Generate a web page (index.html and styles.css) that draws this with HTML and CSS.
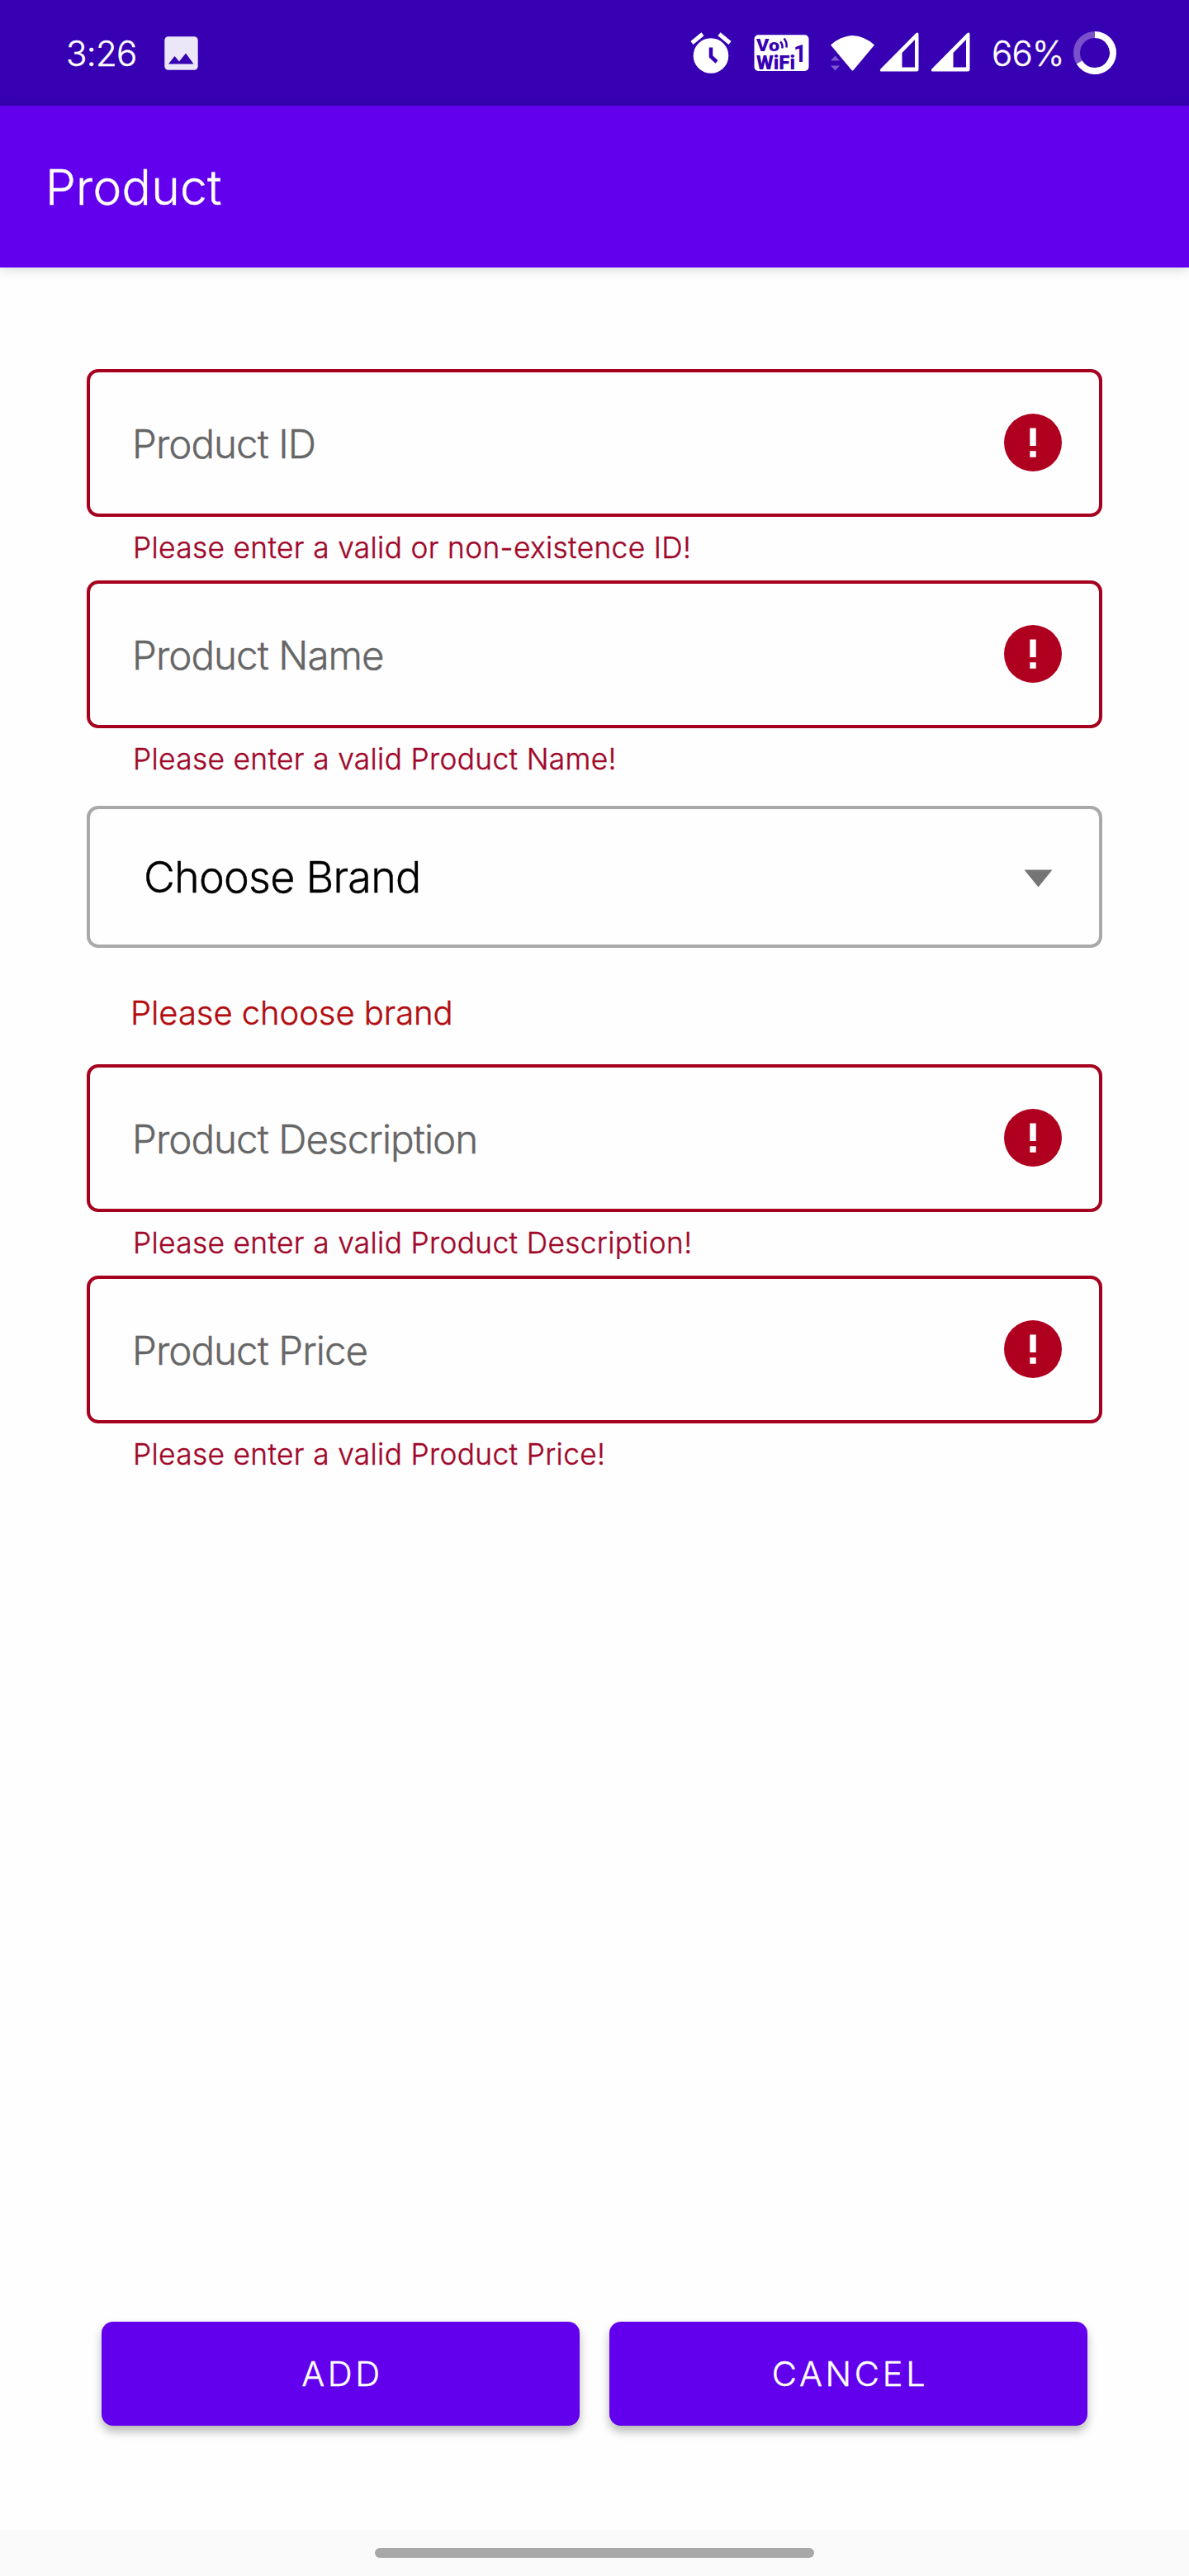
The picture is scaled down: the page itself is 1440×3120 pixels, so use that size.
FILE: index.html
```html
<!DOCTYPE html>
<html lang="en">
<head>
<meta charset="utf-8">
<title>Product</title>
<link rel="stylesheet" href="styles.css">
</head>
<body>
<div class="screen">
  <header class="status">
    <span class="clock">3:26</span>
    <svg class="picture" width="41" height="41" viewBox="0 0 41 41"><rect x=".3" y=".3" width="40.4" height="40.4" rx="4.5" fill="#ebe6f8"/><path d="M5 33.5 12.5 24l5.5 6.5 8-10L35.500 33.500z" fill="#3700b3"/></svg>
    <div class="indicators">
      <svg class="alarm" width="50" height="50" viewBox="0 0 50 50"><circle cx="25" cy="28.500" r="21.300" fill="#fff"/><path d="M2 13 15 2.300M35 2.300 48 13" stroke="#fff" stroke-width="5" fill="none"/><path d="M25 18.500v11l7 6.500" stroke="#3700b3" stroke-width="4.500" fill="none"/></svg>
      <svg class="vowifi" width="67" height="45" viewBox="0 0 67 45"><rect x=".5" y=".3" width="66" height="43.700" rx="5" fill="#fff"/><g class="vowifi-text"><text x="3" y="19.500" font-size="21" textLength="28" lengthAdjust="spacingAndGlyphs">Vo</text><text x="3" y="41.500" font-size="23" textLength="47" lengthAdjust="spacingAndGlyphs">WiFi</text></g><text class="vowifi-one" x="48" y="33" font-size="30" textLength="16" lengthAdjust="spacingAndGlyphs">1</text><path d="M32 8.500q3 2.500 2.500 8M36.500 4.500q4 4.500 3 11" stroke="#3700b3" stroke-width="2.500" fill="none"/></svg>
      <svg class="wifi" width="54" height="45" viewBox="0 0 54 45"><path d="M1 12.500Q12 2 27.500 1 43 2 54 12.500L28.500 43q-1 1-2 0z" fill="#fff"/><path d="M1 31.500 6.500 25.500 12 31.500zM1 37.500h11l-5.500 6z" fill="#8059cf"/></svg>
      <svg class="signal" width="48" height="48" viewBox="0 0 48 48"><path fill-rule="evenodd" d="M1.500 47.500Q0 46 1.500 44.500L44 1.500Q47.500-1 47.500 3V45q0 2.500-2.500 2.500zM27.500 25V42.500H43V9z" fill="#fff"/></svg>
      <svg class="signal second" width="48" height="48" viewBox="0 0 48 48"><path fill-rule="evenodd" d="M1.500 47.500Q0 46 1.500 44.500L44 1.500Q47.500-1 47.500 3V45q0 2.500-2.500 2.500zM27.500 25V42.500H43V9z" fill="#fff"/></svg>
      <span class="percent">66%</span>
      <svg class="battery" width="52" height="52" viewBox="0 0 52 52"><circle cx="26" cy="26" r="22" fill="none" stroke="#7a50cc" stroke-width="8"/><path d="M26 4A22 22 0 1 1 7.200 37.500" fill="none" stroke="#fff" stroke-width="8"/></svg>
    </div>
  </header>
  <div class="appbar"><h1 class="title">Product</h1></div>
  <main class="form">
    <div class="field"><span class="label">Product ID</span><svg class="alert" width="70" height="70" viewBox="0 0 70 70"><circle cx="35" cy="35" r="35" fill="#b00020"/><path d="M31.300 17.500h7.400v21.500h-7.400zM31.300 45.300h7.400v7.400h-7.400z" fill="#fff"/></svg></div>
    <p class="error">Please enter a valid or non-existence ID!</p>
    <div class="field"><span class="label">Product Name</span><svg class="alert" width="70" height="70" viewBox="0 0 70 70"><circle cx="35" cy="35" r="35" fill="#b00020"/><path d="M31.300 17.500h7.400v21.500h-7.400zM31.300 45.300h7.400v7.400h-7.400z" fill="#fff"/></svg></div>
    <p class="error">Please enter a valid Product Name!</p>
    <div class="select"><span class="choice">Choose Brand</span><svg class="arrow" width="35" height="22" viewBox="0 0 35 22"><path d="M.5.500h34L17.500 21.500z" fill="#757575"/></svg></div>
    <p class="brand-error">Please choose brand</p>
    <div class="field"><span class="label">Product Description</span><svg class="alert" width="70" height="70" viewBox="0 0 70 70"><circle cx="35" cy="35" r="35" fill="#b00020"/><path d="M31.300 17.500h7.400v21.500h-7.400zM31.300 45.300h7.400v7.400h-7.400z" fill="#fff"/></svg></div>
    <p class="error">Please enter a valid Product Description!</p>
    <div class="field"><span class="label">Product Price</span><svg class="alert" width="70" height="70" viewBox="0 0 70 70"><circle cx="35" cy="35" r="35" fill="#b00020"/><path d="M31.300 17.500h7.400v21.500h-7.400zM31.300 45.300h7.400v7.400h-7.400z" fill="#fff"/></svg></div>
    <p class="error">Please enter a valid Product Price!</p>
  </main>
  <div class="actions"><button class="btn">ADD</button><button class="btn">CANCEL</button></div>
  <footer class="nav"><div class="pill"></div></footer>
</div>
</body>
</html>
```
FILE: styles.css
```css
* { box-sizing: border-box; }
body { margin: 0; background: #fefefe; }
svg { display: block; flex: none; overflow: visible; -webkit-text-stroke: 0; }
p, h1 { margin: 0; font-weight: inherit; white-space: nowrap; }

.screen {
  width: 1440px;
  height: 3120px;
  display: flex;
  flex-direction: column;
  font-family: Inter, "Liberation Sans", sans-serif;
  font-weight: 300;
  -webkit-text-stroke: .4px currentColor;
}

/* Status bar */
.status {
  height: 128px;
  flex: none;
  display: flex;
  align-items: center;
  padding: 0 88px 0 80px;
  background: #3700b3;
  color: #fff;
}
.clock { width: 119px; padding-top: 1px; font-size: 42px; letter-spacing: -.7px; }
.picture { margin-top: 1px; }
.indicators { display: flex; align-items: center; margin-left: auto; }
.vowifi { margin-left: 27px; }
.vowifi-text { font-family: Roboto, sans-serif; font-weight: 900; fill: #3700b3; }
.vowifi-one { font-family: Roboto, sans-serif; font-weight: 700; fill: #3700b3; }
.wifi { margin-left: 25px; }
.signal { margin: 0 0 3px 6px; }
.signal.second { margin-left: 14px; }
.percent { width: 99px; margin-left: 26px; padding-top: 1px; font-size: 42px; letter-spacing: -.75px; }

/* App bar */
.appbar {
  height: 196px;
  flex: none;
  display: flex;
  align-items: center;
  padding-left: 55px;
  background: #6200ee;
  color: #fff;
  box-shadow: 0 2px 14px rgba(0, 0, 0, .16);
}
.title { font-size: 58.700px; letter-spacing: .26px; padding-top: 1px; }

/* Form */
.form { display: flex; flex-direction: column; padding: 123px 105px 0; }
.field {
  height: 179px;
  display: flex;
  align-items: center;
  justify-content: space-between;
  padding: 0 45px 0 51px;
  border: 4px solid #a6001f;
  border-radius: 14px;
}
.label { padding-top: 2px; font-size: 47.500px; letter-spacing: -.95px; color: #666; }
.alert { margin-bottom: 1px; }
.error {
  height: 77px;
  padding-left: 56px;
  font-size: 35.300px;
  line-height: 75px;
  letter-spacing: .34px;
  color: #a0082a;
}
.select {
  height: 172px;
  display: flex;
  align-items: center;
  justify-content: space-between;
  margin-top: 17px;
  padding: 0 56px 0 65px;
  border: 4px solid #a9a9a9;
  border-radius: 14px;
}
.choice { font-size: 52px; letter-spacing: -.76px; color: #000; }
.arrow { margin-top: 3px; }
.brand-error {
  height: 141px;
  padding-left: 53px;
  font-size: 40px;
  line-height: 158px;
  letter-spacing: -.05px;
  color: #b20c10;
}

/* Bottom actions */
.actions { display: flex; gap: 36px; margin-top: auto; padding: 0 123px 126px; }
.btn {
  flex: 1;
  height: 126px;
  padding: 0 0 0 4px;
  border: 0;
  border-radius: 14px;
  background: #6200ee;
  color: #fff;
  font: 300 41.500px Inter, "Liberation Sans", sans-serif;
  letter-spacing: 3.700px;
  box-shadow: 0 7px 12px rgba(0, 0, 0, .28);
}
.nav { height: 56px; flex: none; display: flex; align-items: center; justify-content: center; background: #fafafa; }
.pill { width: 532px; height: 12px; border-radius: 6px; background: #a8a8a8; }
```
